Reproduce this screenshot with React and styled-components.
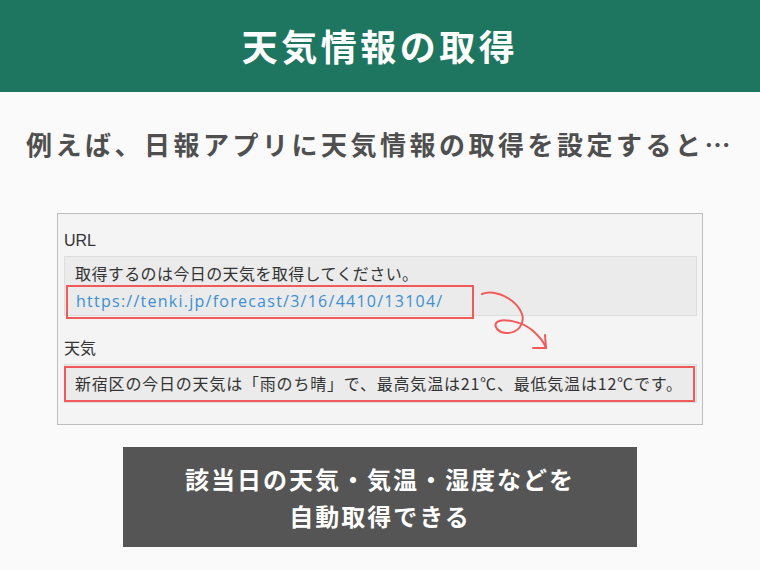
import React from 'react';
import styled, { createGlobalStyle } from 'styled-components';

const GlobalStyle = createGlobalStyle`
  html, body {
    margin: 0;
    padding: 0;
    background: #fafafa;
  }
  body {
    font-family: "Noto Sans CJK JP", "Noto Sans", sans-serif;
  }
`;

const Page = styled.div`
  width: 760px;
  height: 570px;
  overflow: hidden;
  display: flex;
  flex-direction: column;
  align-items: center;
`;

const Header = styled.header`
  width: 100%;
  height: 92px;
  background: #1f7660;
  display: flex;
  justify-content: center;
  align-items: center;
  color: #fff;
  font-size: 36px;
  font-weight: 700;
  letter-spacing: 3.5px;
  padding-bottom: 2px;
  box-sizing: border-box;
`;

const Lead = styled.h2`
  margin: 30px 0 0;
  height: 44px;
  line-height: 44px;
  font-size: 26px;
  font-weight: 700;
  letter-spacing: 3.5px;
  color: #4f4f4f;
`;

const Panel = styled.section`
  position: relative;
  margin-top: 47px;
  width: 646px;
  height: 212px;
  box-sizing: border-box;
  border: 1px solid #bdbdbd;
  background: #f4f4f4;
  padding: 14px 5px 0 6px;
  color: #333;
`;

const Label = styled.div`
  font-family: "Liberation Sans", "Noto Sans CJK JP", sans-serif;
  font-size: 16px;
  height: 28px;
  line-height: 26px;
`;

const Field = styled.div`
  box-sizing: border-box;
  width: 633px;
  height: ${({ h }) => h}px;
  background: #ebebeb;
  border: 1px solid #dedede;
  padding: ${({ pad }) => pad};
  margin-bottom: ${({ mb }) => mb}px;
`;

const Line = styled.div`
  font-size: 16px;
  line-height: 24px;
  letter-spacing: 0.4px;
  white-space: nowrap;
`;

const UrlBox = styled.div`
  box-sizing: border-box;
  width: 408px;
  height: 34px;
  margin-left: -9px;
  padding-left: 8px;
  border: 2px solid #f25a5a;
  color: #3b8fd2;
  font-family: "Open Sans", "Liberation Sans", sans-serif;
  font-size: 16px;
  letter-spacing: 1.25px;
  line-height: 28px;
  white-space: nowrap;
`;

const ResultBox = styled.div`
  box-sizing: border-box;
  width: 631px;
  height: 36px;
  margin: 1px 0 0 -1px;
  padding-left: 9px;
  border: 2px solid #f25a5a;
  font-size: 16px;
  line-height: 31px;
  letter-spacing: 0.8px;
  white-space: nowrap;
`;

const Arrow = styled.svg`
  position: absolute;
  left: 418px;
  top: 72px;
  overflow: visible;
`;

const Note = styled.div`
  margin-top: 22px;
  width: 514px;
  height: 100px;
  background: #555555;
  color: #fff;
  display: flex;
  flex-direction: column;
  justify-content: center;
  align-items: center;
  font-size: 24px;
  font-weight: 700;
  letter-spacing: 2px;
  line-height: 37px;
`;

export default function App() {
  return (
    <>
      <GlobalStyle />
      <Page>
        <Header>天気情報の取得</Header>
        <Lead>例えば、日報アプリに天気情報の取得を設定すると…</Lead>
        <Panel>
          <Label>URL</Label>
          <Field h={60} pad="4px 0 0 10px" mb={20}>
            <Line>取得するのは今日の天気を取得してください。</Line>
            <UrlBox>https://tenki.jp/forecast/3/16/4410/13104/</UrlBox>
          </Field>
          <Label>天気</Label>
          <Field h={39} pad="0" mb={0}>
            <ResultBox>新宿区の今日の天気は「雨のち晴」で、最高気温は21℃、最低気温は12℃です。</ResultBox>
          </Field>
          <Arrow width="72" height="64" viewBox="0 0 72 64">
            <path
              d="M6 8 C 18 3, 40 12, 46 28 C 49 38, 42 47, 31 47 C 22 47, 17 40, 21 36 C 26 32, 45 35, 56 44 C 63 50, 68 56, 70 62"
              fill="none"
              stroke="#f25a5a"
              strokeWidth="2"
              strokeLinecap="round"
            />
            <path
              d="M57 62 L70 62 L69 49"
              fill="none"
              stroke="#f25a5a"
              strokeWidth="2"
              strokeLinecap="round"
              strokeLinejoin="round"
            />
          </Arrow>
        </Panel>
        <Note>
          <div>該当日の天気・気温・湿度などを</div>
          <div>自動取得できる</div>
        </Note>
      </Page>
    </>
  );
}
